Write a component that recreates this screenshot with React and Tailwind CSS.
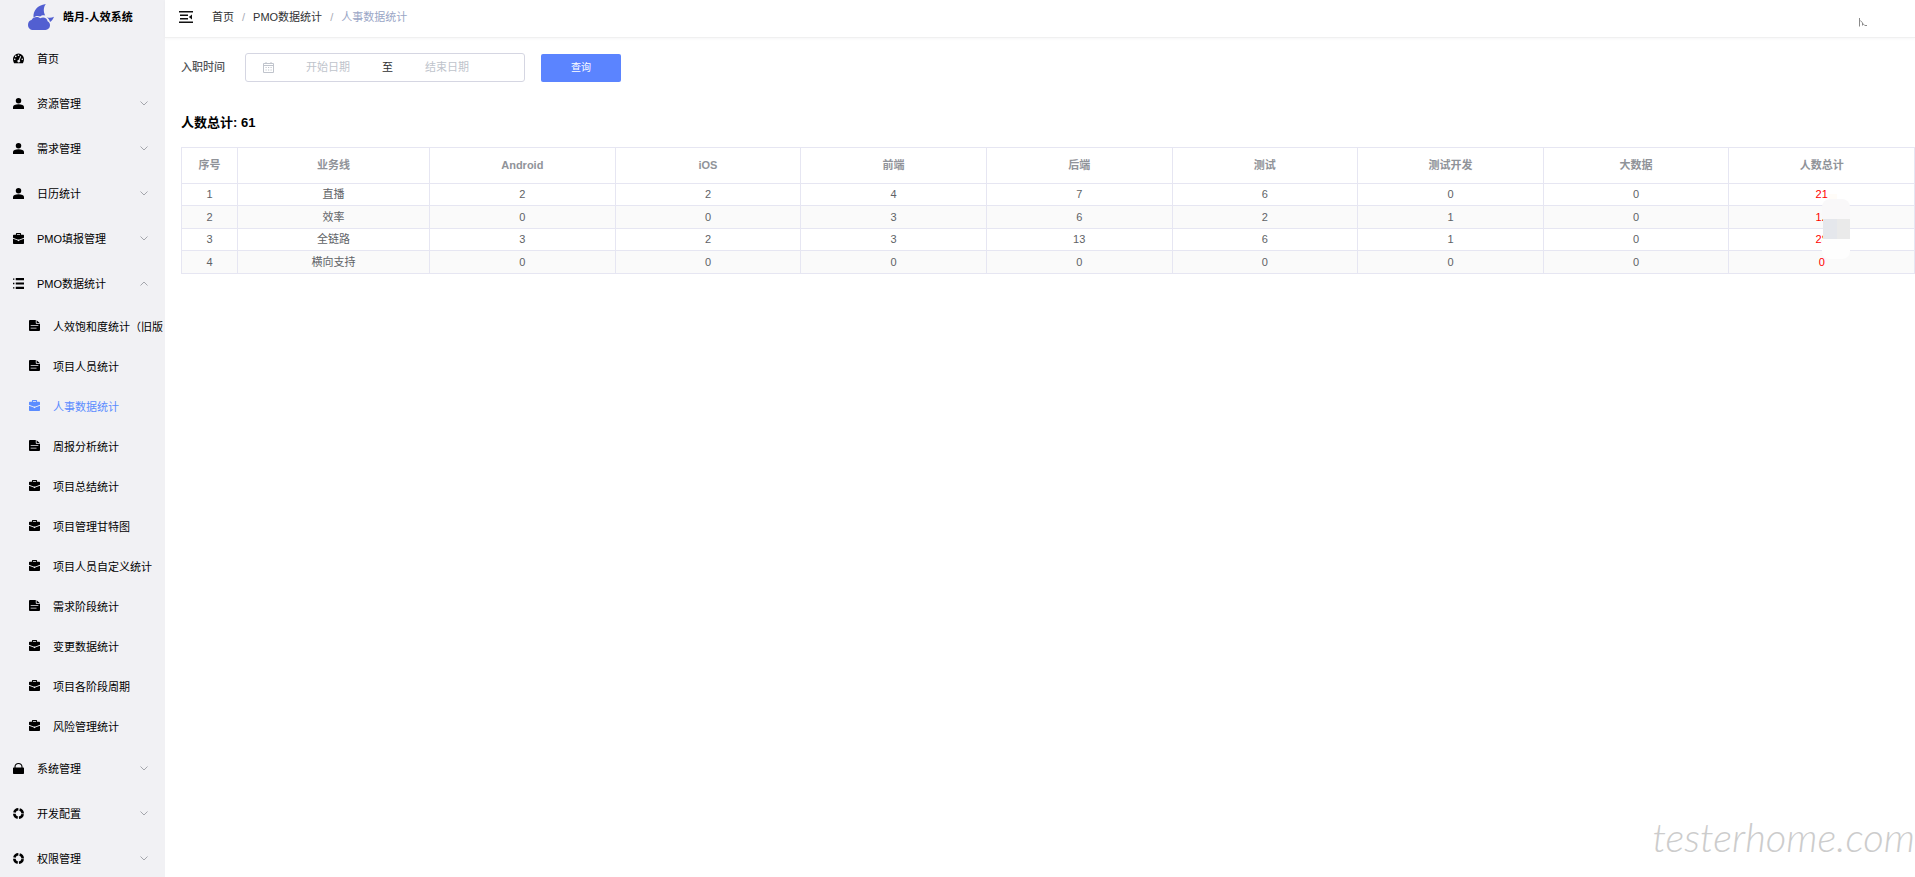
import React, { useState } from 'react';
import clsx from 'clsx';

const ICONS = {
  dashboard: (
    <path
      fillRule="evenodd"
      d="M6 .6A6 6 0 0 0 0 6.600c0 1.700.5 3 1.200 4.600h9.600c.7-1.600 1.200-2.900 1.200-4.600A6 6 0 0 0 6 .6zM6 1.500a.9.9 0 1 1 0 1.800.9.9 0 0 1 0-1.800zM3 2.800a.9.9 0 1 1 0 1.800.9.9 0 0 1 0-1.800zM1.900 5.900a.9.9 0 1 1 0 1.800.9.9 0 0 1 0-1.800zM10.100 5.900a.9.9 0 1 1 0 1.800.9.9 0 0 1 0-1.800zM8 3.300l.9.4-1.600 4a1.500 1.500 0 1 1-1-.4z"
    />
  ),
  user: (
    <>
      <circle cx="6" cy="3" r="3" />
      <path d="M0 12V9.800C0 7.700 2.600 6.800 6 6.800s6 .9 6 3V12z" />
    </>
  ),
  briefcase: (
    <path
      fillRule="evenodd"
      d="M3.200 1.800V.9c0-.5.3-.9.800-.9h4c.5 0 .8.4.8.9v.9h2.400c.5 0 .8.3.8.8v2.600L7.200 7H4.800L0 5.200V2.600c0-.5.3-.8.800-.8zM4.300 1.800h3.400V1H4.300zM0 6.200l4.600 1.700L6 9l1.400-1.100L12 6.200v4.900c0 .5-.3.8-.8.8H.8c-.5 0-.8-.3-.8-.8z"
    />
  ),
  list: <path d="M0 .5h1.500V2H0zM3 0h9v2.400H3zM0 5.300h1.500v1.500H0zM3 4.800h9v2.400H3zM0 10h1.500v1.500H0zM3 9.600h9V12H3z" />,
  document: (
    <path
      fillRule="evenodd"
      d="M1 0h6.400v3.200c0 .6.400 1 1 1H12V11c0 .6-.4 1-1 1H1c-.6 0-1-.4-1-1V1c0-.6.4-1 1-1zM8.300.2 11.700 3.400H8.300zM1.800 5.600v.9h8.400v-.9zM1.800 8.400v.9h6.400v-.9z"
    />
  ),
  lock: (
    <path
      fillRule="evenodd"
      d="M1.600 5V4.200C1.600 1.800 3.500 0 6 0s4.400 1.800 4.400 4.200V5h.8c.5 0 .8.3.8.8v5.400c0 .5-.3.8-.8.800H.8c-.5 0-.8-.3-.8-.8V5.800c0-.5.3-.8.800-.8zM2.800 5h6.400v-.8C9.200 2.400 7.800 1.200 6 1.200S2.800 2.400 2.800 4.200z"
    />
  ),
  ring: <circle cx="6" cy="6" r="4.600" fill="none" stroke="currentColor" strokeWidth="2.800" strokeDasharray="5.826 1.400" strokeDashoffset="-0.700" />,
};

const MENU = [
  { icon: 'dashboard', label: '首页' },
  { icon: 'user', label: '资源管理', expandable: true },
  { icon: 'user', label: '需求管理', expandable: true },
  { icon: 'user', label: '日历统计', expandable: true },
  { icon: 'briefcase', label: 'PMO填报管理', expandable: true },
  {
    icon: 'list',
    label: 'PMO数据统计',
    expandable: true,
    children: [
      { icon: 'document', label: '人效饱和度统计（旧版' },
      { icon: 'document', label: '项目人员统计' },
      { icon: 'briefcase', label: '人事数据统计', active: true },
      { icon: 'document', label: '周报分析统计' },
      { icon: 'briefcase', label: '项目总结统计' },
      { icon: 'briefcase', label: '项目管理甘特图' },
      { icon: 'briefcase', label: '项目人员自定义统计' },
      { icon: 'document', label: '需求阶段统计' },
      { icon: 'briefcase', label: '变更数据统计' },
      { icon: 'briefcase', label: '项目各阶段周期' },
      { icon: 'briefcase', label: '风险管理统计' },
    ],
  },
  { icon: 'lock', label: '系统管理', expandable: true },
  { icon: 'ring', label: '开发配置', expandable: true },
  { icon: 'ring', label: '权限管理', expandable: true },
];

const COLUMNS = ['序号', '业务线', 'Android', 'iOS', '前端', '后端', '测试', '测试开发', '大数据', '人数总计'];

const ROWS = [
  [1, '直播', 2, 2, 4, 7, 6, 0, 0, 21],
  [2, '效率', 0, 0, 3, 6, 2, 1, 0, 12],
  [3, '全链路', 3, 2, 3, 13, 6, 1, 0, 28],
  [4, '横向支持', 0, 0, 0, 0, 0, 0, 0, 0],
];

const MenuIcon = ({ name }) => (
  <svg viewBox="0 0 12 12" className="mb-[3px] h-[11px] w-[11px] shrink-0" fill="currentColor" aria-hidden="true">
    {ICONS[name]}
  </svg>
);

const Chevron = ({ open }) => (
  <svg viewBox="0 0 8 5" className="mr-[17px] mb-[3px] ml-auto h-[5px] w-2 shrink-0" fill="none" stroke="#909399" strokeWidth="0.800" aria-hidden="true">
    <path d={open ? 'M.5 4.500 4 1l3.500 3.500' : 'M.5.5 4 4 7.500.5'} />
  </svg>
);

const Sidebar = () => (
  <aside className="h-screen w-[165px] shrink-0 overflow-hidden bg-[#f1f1f4] text-black">
    <a href="#home" className="flex h-[37px] items-center pl-7 pb-2">
      <svg viewBox="0 0 26 26" className="mt-1 h-[26px] w-[26px] shrink-0" fill="#525fd1" aria-hidden="true">
        <path d="M5.500 13.500C5 7 9 1.200 17.800 0c-2.400 3-2.600 7.600-.6 11.400-2-.6-3.800-.1-5 1.100-2.200-1-5-.6-6.700 1z" />
        <path d="M18.800 13.200c2.800.9 5 .5 7.200-.4-.8 2.200-2 3.900-4 5.300-.4-1.900-1.400-3.500-3.200-4.900z" />
        <path d="M5.500 26C2 26 0 23.800 0 20.700c0-2.500 1.500-4.300 3.500-4.700 1.500-3 6-4.200 8.700-1.700 3-2 7-.4 7.400 3 1.700.9 2.400 2.300 2.400 4 0 2.700-2 4.700-4.500 4.700z" />
      </svg>
      <span className="mt-1 ml-[9px] text-[11px] leading-4 font-bold">皓月-人效系统</span>
    </a>
    <nav>
      {MENU.map((item) => (
        <div key={item.label}>
          <a href="#menu" className="flex h-[45px] items-center pl-[13px] text-[11px] whitespace-nowrap">
            <MenuIcon name={item.icon} />
            <span className="ml-[13px]">{item.label}</span>
            {item.expandable && <Chevron open={!!item.children} />}
          </a>
          {item.children?.map((child) => (
            <a
              key={child.label}
              href="#menu"
              className={clsx('flex h-10 items-center pl-[29px] text-[11px] whitespace-nowrap', child.active && 'text-[#5b8cff]')}
            >
              <MenuIcon name={child.icon} />
              <span className="ml-[13px]">{child.label}</span>
            </a>
          ))}
        </div>
      ))}
    </nav>
  </aside>
);

const Header = () => (
  <header className="flex h-[38px] items-center border-b border-[#f0f0f0] pl-[14px] pb-1 shadow-[0_1px_3px_rgba(0,21,41,0.04)]">
    <button type="button" aria-label="收起菜单">
      <svg viewBox="0 0 14 12" className="h-3 w-[14px]" fill="#111" aria-hidden="true">
        <path d="M0 0h14v1.500H0zM1 3.500h8v1.400H1zM1 7h8v1.400H1zM0 10.500h14V12H0zM13 3.500v5L9.800 6z" />
      </svg>
    </button>
    <nav className="ml-[19px] flex text-[11px] leading-4 text-[#303133]">
      <a href="#home">首页</a>
      <span className="mx-2 text-[#a8abb5]">/</span>
      <a href="#pmo">PMO数据统计</a>
      <span className="mx-2 text-[#a8abb5]">/</span>
      <span className="text-[#9aa6c6]">人事数据统计</span>
    </nav>
    {/* what is left visible of the masked user name */}
    <svg viewBox="0 0 8 9" className="mt-3 mr-12 ml-auto h-[9px] w-2" fill="none" stroke="#8a8a8a" aria-hidden="true">
      <path d="M.5 0v8.500M1.500 2.500l1.500 2M3.500 4.500v3M4 5.500l1.500 2M6 7.500h2" />
    </svg>
  </header>
);

const FilterBar = () => {
  const [start, setStart] = useState('');
  const [end, setEnd] = useState('');

  return (
    <form onSubmit={(e) => e.preventDefault()} className="flex items-center text-[11px]">
      <label htmlFor="start" className="font-medium text-[#505256]">入职时间</label>
      <div className="ml-5 flex h-[29px] w-[280px] items-center rounded-[3px] border border-[#d5d6e2] pl-[17px]">
        <svg viewBox="0 0 11 11" className="h-[11px] w-[11px]" fill="none" stroke="#c0c4cc" aria-hidden="true">
          <path d="M.5 1.500h10v9H.5zM.5 3.500h10M3 0v2M8 0v2M2.500 5.500h1.200M5 5.500h1.200M7.500 5.500h1.200M2.500 8h1.200M5 8h1.200M7.500 8h1.200" />
        </svg>
        <input
          id="start"
          value={start}
          onChange={(e) => setStart(e.target.value)}
          placeholder="开始日期"
          className="w-[108px] text-center outline-none placeholder:text-[#c0c4cc]"
        />
        <span className="text-[#303133]">至</span>
        <input
          aria-label="结束日期"
          value={end}
          onChange={(e) => setEnd(e.target.value)}
          placeholder="结束日期"
          className="w-[108px] text-center outline-none placeholder:text-[#c0c4cc]"
        />
      </div>
      <button type="submit" className="ml-4 h-7 w-20 rounded-[2px] bg-[#5b84ff] text-[10px] text-white">查询</button>
    </form>
  );
};

const StatsTable = () => (
  <div className="relative mt-4">
    <table className="w-full table-fixed border-collapse text-center text-[11px] leading-4 text-[#606266]">
      <colgroup>
        <col className="w-[56px]" />
        <col className="w-[192px]" />
      </colgroup>
      <thead>
        <tr className="h-9 text-[#909399]">
          {COLUMNS.map((name) => (
            <th key={name} className="border border-[#e6e6f2] p-0 pb-0.5 font-bold">{name}</th>
          ))}
        </tr>
      </thead>
      <tbody>
        {ROWS.map((row) => (
          <tr key={row[0]} className="h-[22px] even:h-[23px] even:bg-[#fafafa]">
            {row.map((value, i) => (
              <td key={COLUMNS[i]} className={clsx('border border-[#e6e6f2] p-0 pb-px', i === COLUMNS.length - 1 && 'text-[#f00]')}>
                {value}
              </td>
            ))}
          </tr>
        ))}
      </tbody>
    </table>
    {/* masked part of the totals */}
    <div className="absolute top-[47px] right-[65px] w-7">
      <div className="ml-[7px] h-[5px] w-2 bg-[#fffcf8]" />
      <div className="h-5 rounded-t-lg bg-[#f9f8f9]" />
      <div className="ml-px flex h-5">
        <div className="w-[14px] bg-[#e5e7ec]" />
        <div className="flex-1 bg-[#eaeaea]" />
      </div>
      <div className="h-5 rounded-b-lg bg-[#fefefe]" />
    </div>
  </div>
);

export default function App() {
  return (
    <div className="flex h-screen overflow-hidden bg-white font-['Liberation_Sans','Noto_Sans_CJK_SC',sans-serif]">
      <Sidebar />
      <div className="relative flex min-w-0 flex-1 flex-col">
        <Header />
        <main className="flex-1 pt-[15px] pl-4">
          <FilterBar />
          <h1 className="mt-[33px] text-[13px] leading-4 font-bold text-black">人数总计: 61</h1>
          <StatsTable />
        </main>
        <div className="absolute right-0 bottom-5 font-[Lato] text-[40px] leading-10 font-light text-[#cccccc] italic">testerhome.com</div>
      </div>
    </div>
  );
}
